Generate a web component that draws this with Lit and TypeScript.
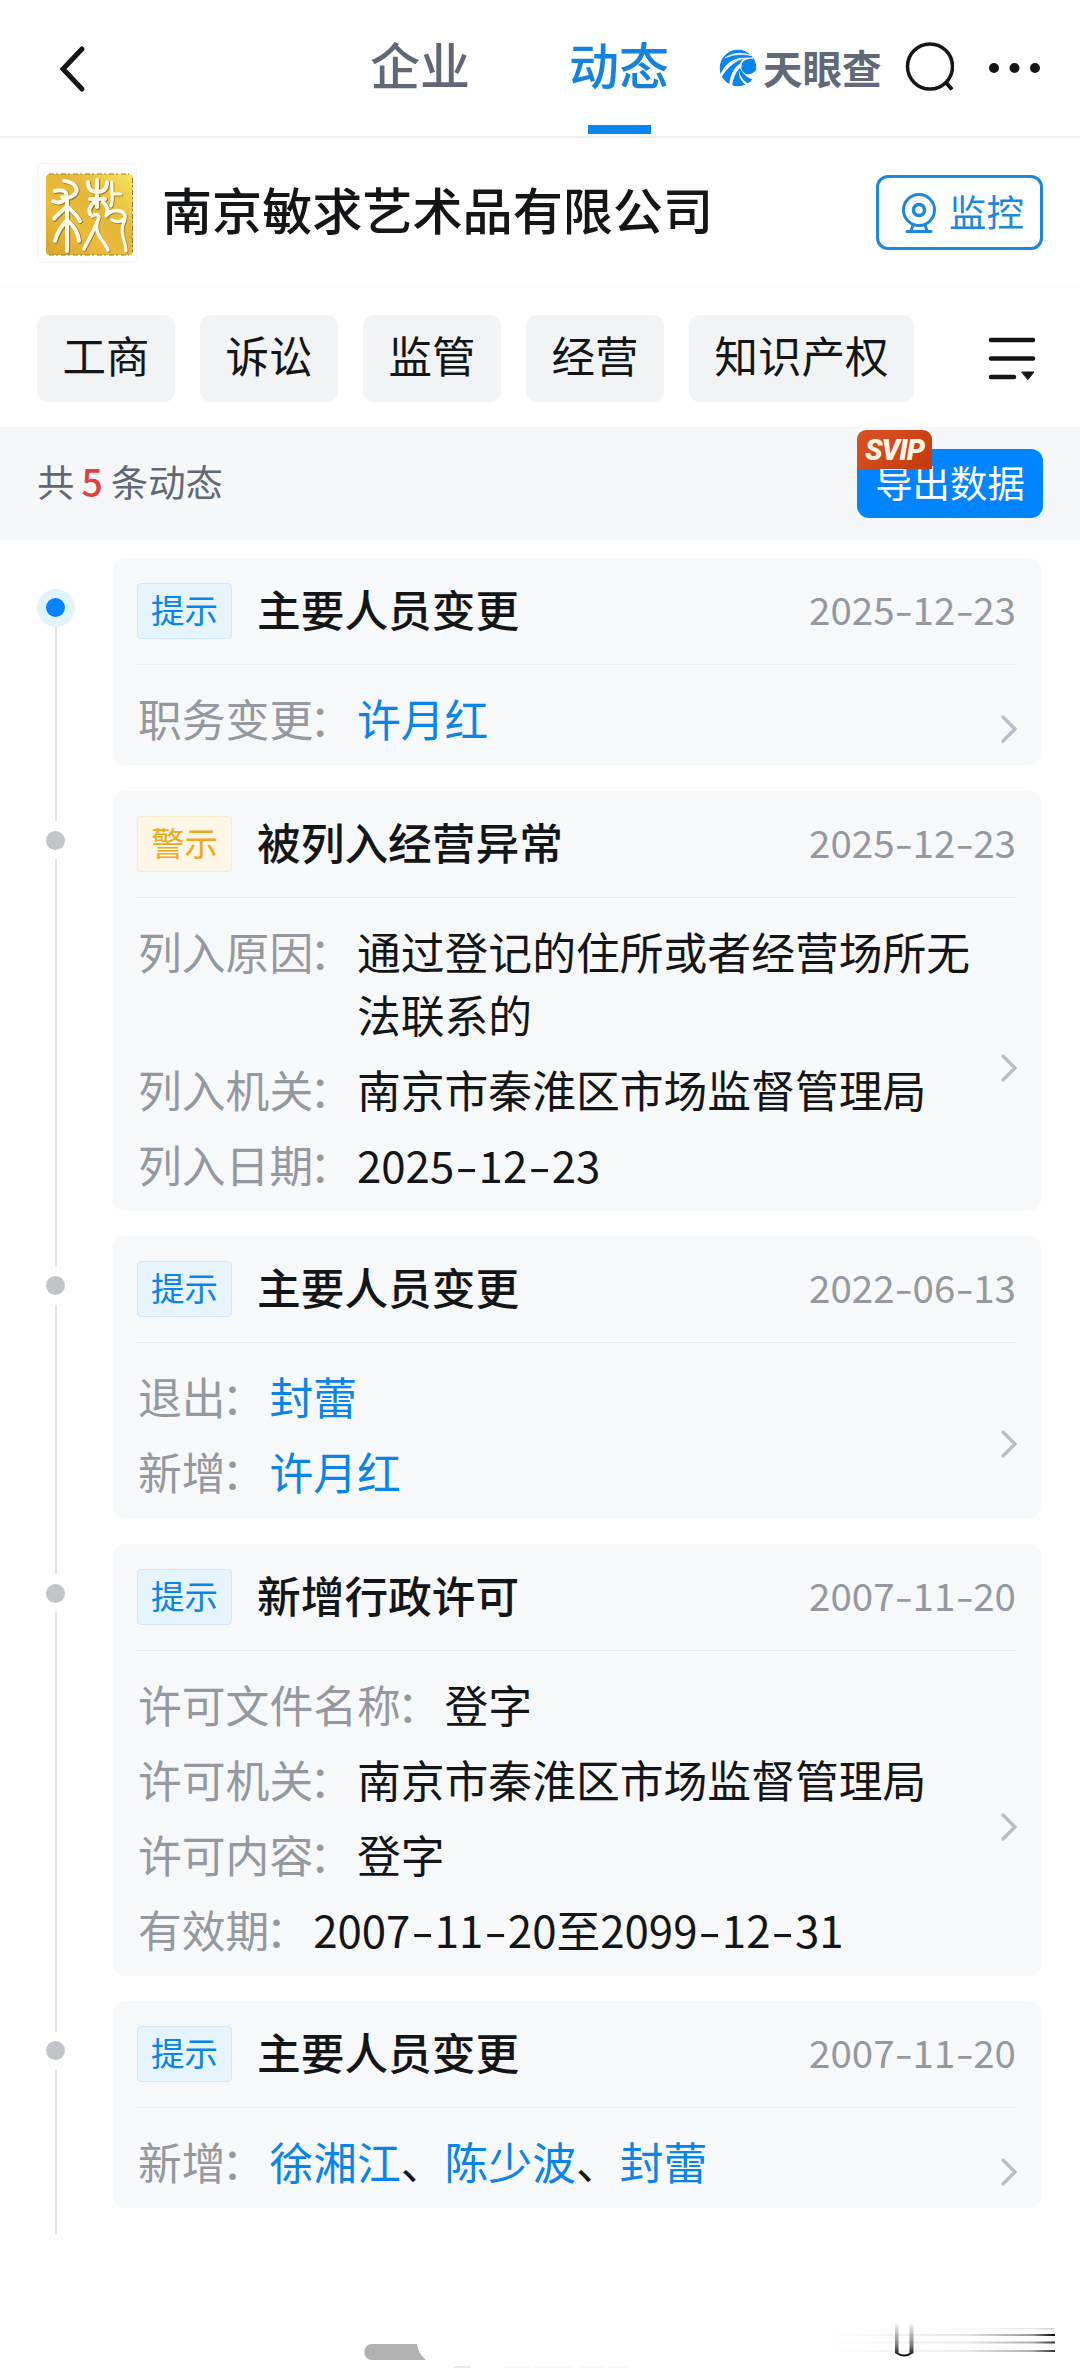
import { LitElement, html, css, svg } from 'lit';
import { customElement, property } from 'lit/decorators.js';
import { classMap } from 'lit/directives/class-map.js';

interface Row {
  label: string;
  value?: string;
  people?: string[];
}

interface EventItem {
  level: 'tip' | 'warn';
  title: string;
  date: string;
  rows: Row[];
}

const CATEGORIES = ['工商', '诉讼', '监管', '经营', '知识产权'];

const EVENTS: EventItem[] = [
  {
    level: 'tip',
    title: '主要人员变更',
    date: '2025-12-23',
    rows: [{ label: '职务变更', people: ['许月红'] }],
  },
  {
    level: 'warn',
    title: '被列入经营异常',
    date: '2025-12-23',
    rows: [
      { label: '列入原因', value: '通过登记的住所或者经营场所无法联系的' },
      { label: '列入机关', value: '南京市秦淮区市场监督管理局' },
      { label: '列入日期', value: '2025-12-23' },
    ],
  },
  {
    level: 'tip',
    title: '主要人员变更',
    date: '2022-06-13',
    rows: [
      { label: '退出', people: ['封蕾'] },
      { label: '新增', people: ['许月红'] },
    ],
  },
  {
    level: 'tip',
    title: '新增行政许可',
    date: '2007-11-20',
    rows: [
      { label: '许可文件名称', value: '登字' },
      { label: '许可机关', value: '南京市秦淮区市场监督管理局' },
      { label: '许可内容', value: '登字' },
      { label: '有效期', value: '2007-11-20至2099-12-31' },
    ],
  },
  {
    level: 'tip',
    title: '主要人员变更',
    date: '2007-11-20',
    rows: [{ label: '新增', people: ['徐湘江', '陈少波', '封蕾'] }],
  },
];

// dates use a wider dash than the font's own hyphen
const withDashes = (text: string) =>
  text.split('-').map((part, i) => (i ? html`<span class="dash">-</span>${part}` : part));

@customElement('event-card')
export class EventCard extends LitElement {
  @property({ attribute: false }) item!: EventItem;
  @property({ type: Boolean }) active = false;

  static styles = css`
    :host {
      display: grid;
      grid-template-columns: 113px 928px;
    }
    .rail {
      display: flex;
      flex-direction: column;
      align-items: center;
      padding-right: 2px;
    }
    .line {
      width: 2px;
      background: #e2e3e5;
    }
    .line.top {
      height: 30.5px;
    }
    .line.top.hidden {
      visibility: hidden;
    }
    .line.bottom {
      flex: 1;
    }
    .node {
      width: 38px;
      height: 38px;
      border-radius: 50%;
      display: flex;
      align-items: center;
      justify-content: center;
    }
    .node.active {
      background: #e3f3fe;
    }
    .dot {
      width: 19px;
      height: 19px;
      border-radius: 50%;
      background: #c2c4c8;
    }
    .active .dot {
      background: #0084ff;
    }
    .card {
      margin-bottom: 25.5px;
      padding: 0 25px 0 24px;
      border-radius: 12px;
      background: #f7f8fa;
    }
    .head {
      display: flex;
      align-items: center;
      height: 106px;
      border-bottom: 1.5px solid #e8eaec;
    }
    .tag {
      width: 95px;
      height: 56px;
      box-sizing: border-box;
      border: 1.5px solid #cfe8fb;
      border-radius: 4px;
      background: #e6f4fd;
      color: #0a84e6;
      font-size: 33.5px;
      line-height: 50px;
      text-align: center;
    }
    .tag.warn {
      border-color: #fdeccb;
      background: #fef7e8;
      color: #eeaa1e;
    }
    .title {
      margin: 0 0 6px 25px;
      color: #141517;
      font-size: 43.7px;
      font-weight: 500;
      line-height: 60px;
    }
    .date {
      margin: 0 0 6px auto;
      color: #95989e;
      font-size: 38.5px;
      line-height: 60px;
    }
    .dash {
      display: inline-block;
      margin: 0 0.06em;
      transform: scaleX(1.35);
    }
    .body {
      display: flex;
      align-items: center;
      justify-content: space-between;
      padding: 22px 0 15px;
    }
    .rows {
      display: flex;
      flex-direction: column;
      gap: 12px;
      width: 850px;
    }
    .row {
      display: flex;
      font-size: 43.8px;
      line-height: 63px;
      color: #141517;
    }
    .row .dash {
      margin: 0 0.105em;
      transform: scaleX(1.5);
    }
    .label {
      flex: none;
      margin-left: 1px;
      color: #95989e;
    }
    .colon {
      margin: 0 4px 0 -4px;
    }
    .link {
      color: #0a84e6;
    }
    .chevron {
      width: 18px;
      height: 30px;
      margin: 20px -2px 0 0;
      fill: none;
      stroke: #b9bec5;
      stroke-width: 3.4;
      stroke-linecap: round;
    }
  `;

  renderValue(row: Row) {
    if (row.people) {
      return row.people.map((name, i) => html`${i ? '、' : ''}<span class="link">${name}</span>`);
    }
    return withDashes(row.value ?? '');
  }

  render() {
    const { level, title, date, rows } = this.item;
    return html`
      <div class="rail">
        <div class=${classMap({ line: true, top: true, hidden: this.active })}></div>
        <div class=${classMap({ node: true, active: this.active })}><div class="dot"></div></div>
        <div class="line bottom"></div>
      </div>
      <div class="card">
        <div class="head">
          <div class="tag ${level}">${level === 'tip' ? '提示' : '警示'}</div>
          <div class="title">${title}</div>
          <div class="date">${withDashes(date)}</div>
        </div>
        <div class="body">
          <div class="rows">
            ${rows.map(
              (row) => html`
                <div class="row">
                  <span class="label">${row.label}<span class="colon">：</span></span>
                  <span>${this.renderValue(row)}</span>
                </div>
              `
            )}
          </div>
          <svg class="chevron" viewBox="0 0 18 30"><path d="M3 3 L15 15 L3 27" /></svg>
        </div>
      </div>
    `;
  }
}

@customElement('app-root')
export class AppRoot extends LitElement {
  static styles = css`
    :host {
      display: flex;
      flex-direction: column;
      width: 1080px;
      height: 2379px;
      overflow: hidden;
      background: #fefefe;
      font-family: 'Noto Sans CJK SC', sans-serif;
    }
    svg {
      display: block;
      flex: none;
    }
    .nav {
      display: flex;
      align-items: center;
      height: 138px;
      box-sizing: border-box;
      padding-left: 58px;
      border-bottom: 2px solid #efeff0;
    }
    .tabs {
      display: flex;
      gap: 99px;
      align-self: stretch;
      margin-left: 284px;
    }
    .tab {
      display: flex;
      flex-direction: column;
      align-items: center;
      color: #616875;
      font-size: 50px;
      font-weight: 500;
      line-height: 60px;
      padding-top: 33px;
    }
    .tab.on {
      color: #1583dd;
    }
    .bar {
      width: 63px;
      height: 9px;
      margin-top: 32px;
      background: #0a84f0;
    }
    .brand {
      display: flex;
      align-items: center;
      gap: 5px;
      margin-left: 50px;
      color: #616878;
      font-size: 39.5px;
      font-weight: 700;
      line-height: 40px;
    }
    .brand span {
      margin-bottom: 3px;
    }
    .search {
      margin-left: 20px;
    }
    .more {
      margin-left: 34px;
    }
    .company {
      display: flex;
      align-items: center;
      height: 150px;
      padding: 0 37px;
      box-sizing: border-box;
      border-bottom: 1px solid #fbfbfb;
    }
    .seal {
      border: 1px solid #f4f4f6;
      border-radius: 6px;
    }
    .name {
      margin: 0 0 9px 25px;
      color: #141517;
      font-size: 50.1px;
      font-weight: 500;
      line-height: 60px;
    }
    .monitor {
      display: flex;
      align-items: center;
      gap: 12px;
      margin-left: auto;
      width: 167px;
      height: 75px;
      box-sizing: border-box;
      padding-left: 22px;
      border: 3px solid #1c88dc;
      border-radius: 12px;
      color: #1c88dc;
      font-size: 37.4px;
      line-height: 60px;
    }
    .monitor span {
      margin-bottom: 4px;
    }
    .chips {
      display: flex;
      align-items: center;
      gap: 25px;
      height: 139px;
      box-sizing: border-box;
      padding: 2px 44px 0 37px;
    }
    .chip {
      height: 87px;
      padding: 0 25.5px;
      border-radius: 11px;
      background: #f2f3f5;
      color: #141517;
      font-size: 43.5px;
      line-height: 80px;
    }
    .filter {
      margin-left: auto;
    }
    .summary {
      display: flex;
      align-items: center;
      justify-content: space-between;
      height: 113px;
      padding: 0 37px;
      background: #f6f7f9;
      color: #616875;
      font-size: 37.4px;
      line-height: 60px;
    }
    .total {
      margin-bottom: 5px;
    }
    .count {
      color: #e0413e;
      font-weight: 500;
      margin: 0 8px 0 7px;
    }
    .export {
      position: relative;
      width: 186px;
      height: 69px;
      border-radius: 12px;
      background: #0084ff;
      color: #fff;
      text-align: center;
      line-height: 67px;
    }
    .svip {
      position: absolute;
      left: 0;
      top: -19px;
      width: 75px;
      height: 39px;
      border-radius: 9px 9px 0 0;
      background: linear-gradient(135deg, #da5327, #c23a0c);
      color: #fff3e4;
      font: italic 900 29px/40px Roboto, 'Liberation Sans', sans-serif;
      letter-spacing: -1px;
    }
    .timeline {
      flex: 1;
      padding-top: 18px;
    }
  `;

  renderSeal() {
    return html`
      <svg class="seal" width="98" height="98" viewBox="0 0 98 98" fill="none">
        <defs>
          <linearGradient id="gold" x1="0" y1="1" x2="1" y2="0">
            <stop offset="0" stop-color="#d9a42c" />
            <stop offset="0.35" stop-color="#ebbb3d" />
            <stop offset="0.6" stop-color="#e6b63a" />
            <stop offset="1" stop-color="#f8e45c" />
          </linearGradient>
        </defs>
        <rect x="8" y="10" width="87" height="81" rx="4" fill="url(#gold)" />
        <path d="M11 10 H91 M94.500 14 V88 M11 91 H91" stroke="#8a7a3c" stroke-width="1" stroke-dasharray="5 2 2 3" />
        ${[
          { color: '#9a7a28', width: 4.6, shift: 0.8 },
          { color: '#fffbe9', width: 4, shift: 0 },
        ].map(
          ({ color, width, shift }) => svg`
            <g transform="translate(${shift} ${shift})" stroke=${color} stroke-width=${width} stroke-linecap="round">
              <path d="M26 17 C37 18 42 25 36 31 C32 34 28 35 24 33 M17 27 C25 25 30 28 28 33 C26 38 20 40 15 37" />
              <path d="M29 36 V87 M28 43 C24 48 19 50 16 55 M30 43 C35 48 39 51 42 57 M28 57 C23 63 19 69 17 77 M30 57 C36 62 40 68 41 77" />
              <path d="M50 18 C50 25 53 28 59 28 C66 28 69 25 69 18 M59 16 V43 M52 35 H67 M56 38 C52 42 50 46 52 50 M65 38 C69 42 71 45 69 49" />
              <path d="M54 52 C57 50 60 50 61 53 C58 63 51 75 46 85 M59 58 C56 70 66 76 70 86 M68 52 C73 45 84 45 87 51 C88 57 80 59 74 56" stroke-width="3.600" />
              <path d="M74 18 C73 26 76 34 73 42 M76 30 H83 M87 56 C80 68 88 77 88 87" stroke-width="3.200" />
            </g>
          `
        )}
      </svg>
    `;
  }

  renderNav() {
    return html`
      <div class="nav">
        <svg width="28" height="50" viewBox="0 0 28 50" fill="none" stroke="#141517" stroke-width="5" stroke-linecap="round">
          <path d="M24 6 L5 26 L24 46" />
        </svg>
        <div class="tabs">
          <div class="tab">企业</div>
          <div class="tab on">动态<div class="bar"></div></div>
        </div>
        <div class="brand">
          <svg width="39" height="39" viewBox="0 0 39 39" fill="none">
            <defs>
              <clipPath id="disc"><circle cx="19" cy="19" r="18.500" /></clipPath>
            </defs>
            <g clip-path="url(#disc)">
              <circle cx="19" cy="19" r="18.500" fill="#0a84f0" />
              <path d="M39 10 C33 10 29 9 25 12 C20 16 22 23 27 25 C32 26 35 24 39 19 V32 C33 31 26 28 22 21 C19 15 22 11 27 9 L39 8 Z" fill="#fff" />
              <path d="M26 13 C23 17 25 21 28 22 C32 23 35 21 36 18 C31 19 28 17 29 14 Z" fill="#0a84f0" />
              <path d="M6 9 C14 3 24 3 34 7 C24 4.500 15 5 6 9 Z" fill="#fff" stroke="#fff" stroke-width="0.600" />
              <path d="M0 28 C6 14 15 7 30 9 C18 10 9 17 2 29 Z" fill="#fff" />
              <path d="M10 37 C11 27 14 19 22 14 L23 17 C17 22 14 29 13 38 Z" fill="#fff" />
              <path d="M20 21 C21 28 25 33 32 36 L30 38 C23 34 19 28 20 21 Z" fill="#fff" />
            </g>
          </svg>
          <span>天眼查</span>
        </div>
        <svg class="search" width="52" height="52" viewBox="0 0 52 52" fill="none" stroke="#141517" stroke-width="3.500">
          <circle cx="28" cy="24.500" r="22.500" />
          <path d="M44 40.500 L50 47.500" stroke-width="4" />
        </svg>
        <svg class="more" width="54" height="12" viewBox="0 0 54 12" fill="#141517">
          <circle cx="6" cy="6" r="5" />
          <circle cx="26.500" cy="6" r="5" />
          <circle cx="47" cy="6" r="5" />
        </svg>
      </div>
    `;
  }

  renderFooter() {
    return html`
      <svg width="1080" height="64" viewBox="0 0 1080 64">
        <defs>
          <linearGradient id="streak">
            <stop offset="0" stop-color="#000" stop-opacity="0" />
            <stop offset="0.6" stop-color="#000" stop-opacity="0.1" />
            <stop offset="0.9" stop-color="#000" stop-opacity="0.4" />
            <stop offset="1" stop-color="#000" />
          </linearGradient>
          <linearGradient id="drop" x1="0" y1="0" x2="0" y2="1">
            <stop offset="0" stop-color="#000" stop-opacity="0.05" />
            <stop offset="0.65" stop-color="#000" stop-opacity="0.5" />
            <stop offset="1" stop-color="#000" />
          </linearGradient>
        </defs>
        <path d="M372 29 H417 C418 36 421 41 426 45 H372 C362 45 362 29 372 29 Z" fill="#b1b1b1" />
        <path d="M454 52 H471" stroke="#d4d4d4" stroke-width="1" />
        <path d="M505 52 H628" stroke="#f0f0f0" stroke-width="1" stroke-dasharray="24 5 38 8" />
        <rect x="835" y="13" width="219" height="1.500" fill="url(#streak)" opacity="0.2" />
        <rect x="830" y="19" width="225" height="2" fill="url(#streak)" />
        <rect x="830" y="26.500" width="225" height="2" fill="url(#streak)" opacity="0.8" />
        <rect x="830" y="35" width="225" height="2" fill="url(#streak)" opacity="0.8" />
        <path d="M895 9 H898.500 V38 Q904 41 909.500 38 V9 H913.500 V38 Q904 45 895 38 Z" fill="url(#drop)" />
      </svg>
    `;
  }

  render() {
    return html`
      ${this.renderNav()}
      <div class="company">
        ${this.renderSeal()}
        <div class="name">南京敏求艺术品有限公司</div>
        <div class="monitor">
          <svg width="36" height="42" viewBox="0 0 36 42" fill="none" stroke="#1c88dc" stroke-width="3">
            <circle cx="18" cy="18" r="15.500" />
            <circle cx="18" cy="18" r="5.500" stroke-width="3.500" />
            <path d="M12 33 L10 39 M24 33 L26 39 M6 39.500 H30" stroke-linecap="round" />
          </svg>
          <span>监控</span>
        </div>
      </div>
      <div class="chips">
        ${CATEGORIES.map((name) => html`<div class="chip">${name}</div>`)}
        <svg class="filter" width="48" height="46" viewBox="0 0 48 46" stroke="#141517" stroke-width="4.500" stroke-linecap="round">
          <path d="M3 4 H45 M3 22.500 H45 M3 41 H26" />
          <path d="M34 36 H46 L40 43.500 Z" fill="#141517" stroke-width="1" stroke-linejoin="round" />
        </svg>
      </div>
      <div class="summary">
        <div class="total">共<span class="count">5</span>条动态</div>
        <div class="export">导出数据<span class="svip">SVIP</span></div>
      </div>
      <div class="timeline">
        ${EVENTS.map((item, i) => html`<event-card .item=${item} ?active=${i === 0}></event-card>`)}
      </div>
      ${this.renderFooter()}
    `;
  }
}
